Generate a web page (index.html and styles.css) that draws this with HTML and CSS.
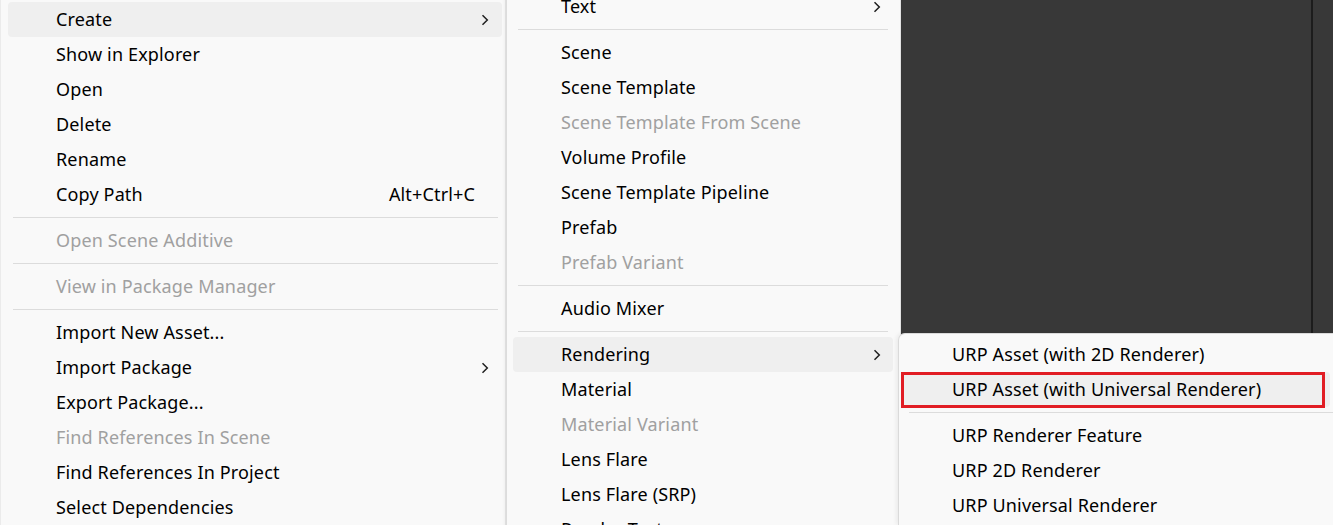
FILE: index.html
```html
<!DOCTYPE html>
<html lang="en">
<head>
<meta charset="utf-8">
<title>Context menu</title>
<link rel="stylesheet" href="styles.css">
</head>
<body>
<div class="screen">
  <div class="menu menu-main">
    <div class="item hover"><span class="label">Create</span><span class="slot"><svg class="chev" viewBox="0 0 8 12"><polyline points="1.5,1.2 6.3,6 1.5,10.8"/></svg></span></div>
    <div class="item"><span class="label">Show in Explorer</span><span class="slot"></span></div>
    <div class="item"><span class="label">Open</span><span class="slot"></span></div>
    <div class="item"><span class="label">Delete</span><span class="slot"></span></div>
    <div class="item"><span class="label">Rename</span><span class="slot"></span></div>
    <div class="item"><span class="label">Copy Path</span><span class="shortcut">Alt+Ctrl+C</span><span class="slot"></span></div>
    <div class="sep"></div>
    <div class="item disabled"><span class="label">Open Scene Additive</span><span class="slot"></span></div>
    <div class="sep"></div>
    <div class="item disabled"><span class="label">View in Package Manager</span><span class="slot"></span></div>
    <div class="sep"></div>
    <div class="item"><span class="label">Import New Asset...</span><span class="slot"></span></div>
    <div class="item"><span class="label">Import Package</span><span class="slot"><svg class="chev" viewBox="0 0 8 12"><polyline points="1.5,1.2 6.3,6 1.5,10.8"/></svg></span></div>
    <div class="item"><span class="label">Export Package...</span><span class="slot"></span></div>
    <div class="item disabled"><span class="label">Find References In Scene</span><span class="slot"></span></div>
    <div class="item"><span class="label">Find References In Project</span><span class="slot"></span></div>
    <div class="item"><span class="label">Select Dependencies</span><span class="slot"></span></div>
  </div>

  <div class="menu menu-create">
    <div class="item"><span class="label">Text</span><span class="slot"><svg class="chev" viewBox="0 0 8 12"><polyline points="1.5,1.2 6.3,6 1.5,10.8"/></svg></span></div>
    <div class="sep"></div>
    <div class="item"><span class="label">Scene</span><span class="slot"></span></div>
    <div class="item"><span class="label">Scene Template</span><span class="slot"></span></div>
    <div class="item disabled"><span class="label">Scene Template From Scene</span><span class="slot"></span></div>
    <div class="item"><span class="label">Volume Profile</span><span class="slot"></span></div>
    <div class="item"><span class="label">Scene Template Pipeline</span><span class="slot"></span></div>
    <div class="item"><span class="label">Prefab</span><span class="slot"></span></div>
    <div class="item disabled"><span class="label">Prefab Variant</span><span class="slot"></span></div>
    <div class="sep"></div>
    <div class="item"><span class="label">Audio Mixer</span><span class="slot"></span></div>
    <div class="sep"></div>
    <div class="item hover"><span class="label">Rendering</span><span class="slot"><svg class="chev" viewBox="0 0 8 12"><polyline points="1.5,1.2 6.3,6 1.5,10.8"/></svg></span></div>
    <div class="item"><span class="label">Material</span><span class="slot"></span></div>
    <div class="item disabled"><span class="label">Material Variant</span><span class="slot"></span></div>
    <div class="item"><span class="label">Lens Flare</span><span class="slot"></span></div>
    <div class="item"><span class="label">Lens Flare (SRP)</span><span class="slot"></span></div>
    <div class="item"><span class="label">Render Texture</span><span class="slot"></span></div>
  </div>

  <div class="side">
    <div class="editor-dark"><div class="editor-divider"></div></div>
    <div class="menu menu-render">
      <div class="item"><span class="label">URP Asset (with 2D Renderer)</span></div>
      <div class="item hover marked"><span class="label">URP Asset (with Universal Renderer)</span></div>
      <div class="sep"></div>
      <div class="item"><span class="label">URP Renderer Feature</span></div>
      <div class="item"><span class="label">URP 2D Renderer</span></div>
      <div class="item"><span class="label">URP Universal Renderer</span></div>
    </div>
  </div>
</div>
</body>
</html>
```

FILE: styles.css
```css
html, body {
  margin: 0;
  padding: 0;
  background: #383838;
}

body {
  font-family: "Noto Sans", "Open Sans", "DejaVu Sans", sans-serif;
  font-size: 18px;
  letter-spacing: 0.15px;
  color: #000;
}

.screen {
  width: 1333px;
  height: 525px;
  overflow: hidden;
  display: flex;
  align-items: flex-start;
}

.menu {
  background: #f9f9f9;
  box-sizing: border-box;
}

.item {
  display: flex;
  align-items: center;
  box-sizing: border-box;
  height: 35px;
  padding-bottom: 2px !important;
  border-radius: 4px;
  white-space: nowrap;
}

.item.hover {
  background: #efefef;
}

.item.disabled {
  color: #a0a0a0;
}

.label {
  flex: 1;
}

.shortcut {
  margin-right: 6px;
}

.slot {
  width: 8px;
  height: 12px;
  display: flex;
  margin-top: 2px;
}

.chev {
  width: 8px;
  height: 12px;
  fill: none;
  stroke: #1f1f1f;
  stroke-width: 1.5;
}

.sep {
  height: 1px;
  background: #dcdcdc;
  margin-top: 5px;
  margin-bottom: 5px;
}

/* Left: project context menu */
.menu-main {
  width: 507px;
  height: 525px;
  flex: none;
  border-left: 1px solid #ebebeb;
  border-right: 2px solid #e6e6e6;
  padding-top: 2px;
}

.menu-main .item {
  margin: 0 3px 0 7px;
  padding: 0 13px 0 48px;
}

.menu-main .sep {
  margin-left: 12px;
  margin-right: 7px;
}

/* Middle: Create submenu */
.menu-create {
  width: 394px;
  height: 560px;
  flex: none;
  margin-top: -11px;
  border-right: 1px solid #e2e2e2;
  box-shadow: -2px 0 4px rgba(0, 0, 0, 0.06);
  position: relative;
  z-index: 1;
}

.menu-create .item {
  margin: 0 7px 0 6px;
  padding: 0 12px 0 48px;
}

.menu-create .sep {
  margin-left: 11px;
  margin-right: 12px;
}

/* Right column: editor background + Rendering submenu */
.side {
  flex: 1;
  display: flex;
  flex-direction: column;
  height: 525px;
}

.editor-dark {
  height: 333px;
  flex: none;
  display: flex;
  background: #383838;
  padding-left: 410px;
  box-sizing: border-box;
}

.editor-divider {
  width: 2px;
  background: #1c1c1c;
}

.menu-render {
  flex: 1;
  margin-left: -3px;
  border-left: 1px solid #dadada;
  border-top: 1px solid #dadada;
  border-top-left-radius: 7px;
  padding-top: 3px;
  position: relative;
  z-index: 2;
  box-shadow: -2px 0 4px rgba(0, 0, 0, 0.06);
}

.menu-render .item {
  margin: 0 3px 0 3px;
  padding: 0 10px 0 50px;
}

.menu-render .sep {
  margin: 5px 0 5px 10px;
}

.item.marked {
  position: relative;
}

.item.marked::after {
  content: "";
  position: absolute;
  left: -1px;
  right: 5px;
  top: 0;
  bottom: -1px;
  border: 3px solid #e11d24;
}
```
